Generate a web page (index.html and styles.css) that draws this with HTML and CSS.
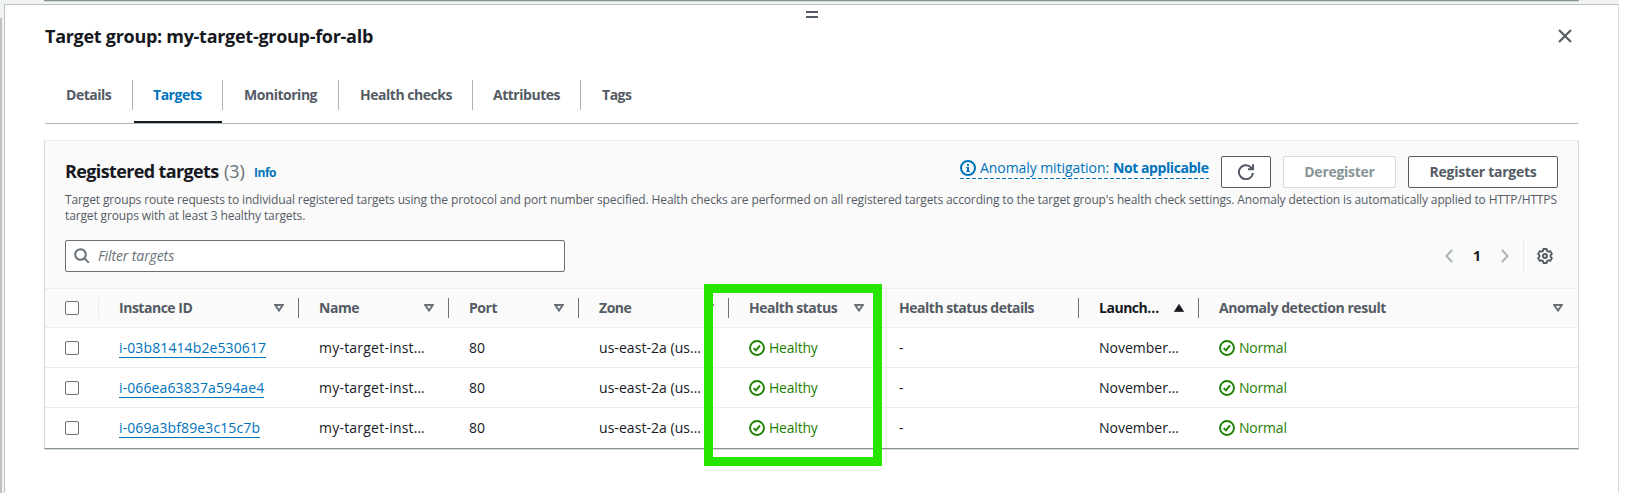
FILE: index.html
```html
<!DOCTYPE html>
<html lang="en">
<head>
<meta charset="utf-8">
<title>Target group: my-target-group-for-alb</title>
<link rel="stylesheet" href="styles.css">
</head>
<body>
<svg class="defs" aria-hidden="true">
  <symbol id="sort" viewBox="0 0 10 8"><path d="M1.2 1h7.6L5 6.6z" fill="none" stroke="currentColor" stroke-width="1.9"/></symbol>
  <symbol id="ok" viewBox="0 0 16 16"><g fill="none" stroke="currentColor" stroke-width="1.9"><circle cx="8" cy="8" r="7"/><path d="M4.6 8.2 7 10.4l4-5"/></g></symbol>
</svg>
<div class="backdrop"><div class="page-scroll"></div><div class="page-edge"></div></div>
<main class="panel">
  <div class="grip"></div>
  <header class="panel-head">
    <h1>Target group: my-target-group-for-alb</h1>
    <svg class="close" viewBox="0 0 14 14"><path d="M1 1l12 12M13 1L1 13" fill="none" stroke="currentColor" stroke-width="2.1"/></svg>
  </header>
  <nav class="tabs">
    <a class="tab t1">Details</a><a class="tab t2 active">Targets</a><a class="tab t3">Monitoring</a><a class="tab t4">Health checks</a><a class="tab t5">Attributes</a><a class="tab t6">Tags</a>
  </nav>
  <section class="box">
    <div class="box-head">
      <div class="title-row">
        <h2>Registered targets</h2><span class="count">(3)</span><a class="info">Info</a>
        <div class="actions">
          <a class="anomaly"><svg class="i16" viewBox="0 0 16 16"><circle cx="8" cy="8" r="7" fill="none" stroke="currentColor" stroke-width="2"/><path d="M7 4h2v2H7zM6.3 7H9v4h1v1H6.3v-1H7V8h-.7z" fill="currentColor"/></svg><span class="am">Anomaly mitigation:</span><b>Not applicable</b></a>
          <button class="btn refresh"><svg class="i16" viewBox="0 0 16 16"><path d="M14.9 9A7 7 0 1 1 13.2 3.6L15 5.2M15 .2v5H10" fill="none" stroke="currentColor" stroke-width="2"/></svg></button>
          <button class="btn dereg">Deregister</button>
          <button class="btn reg">Register targets</button>
        </div>
      </div>
      <p class="desc"><span class="line">Target groups route requests to individual registered targets using the protocol and port number specified. Health checks are performed on all registered targets according to the target group's health check settings. Anomaly detection is automatically applied to HTTP/HTTPS</span> <span class="line">target groups with at least 3 healthy targets.</span></p>
      <div class="filter-row">
        <div class="search"><svg class="i16" viewBox="0 0 16 16"><g fill="none" stroke="currentColor" stroke-width="2"><circle cx="6.5" cy="6.5" r="5.3"/><path d="M10.4 10.4l4.4 4.2"/></g></svg><span>Filter targets</span></div>
        <div class="pager">
          <svg class="chev" viewBox="0 0 8 14"><path d="M7.2 1L1.4 7l5.8 6" fill="none" stroke="currentColor" stroke-width="2"/></svg>
          <b>1</b>
          <svg class="chev" viewBox="0 0 8 14"><path d="M.8 1l5.8 6-5.8 6" fill="none" stroke="currentColor" stroke-width="2"/></svg>
          <span class="rule"></span>
          <svg class="gear" viewBox="0 0 16 16"><g fill="none" stroke="currentColor" stroke-width="1.9" stroke-linejoin="round"><path d="M6.4 1h3.2l.5 1.9 1.3.8 1.9-.6 1.6 2.8L13.5 7.3v1.4l1.4 1.4-1.6 2.8-1.9-.6-1.3.8-.5 1.9H6.4l-.5-1.9-1.3-.8-1.9.6-1.6-2.8 1.4-1.4V7.3L1.1 5.9l1.6-2.8 1.9.6 1.3-.8z"/><circle cx="8" cy="8" r="2"/></g></svg>
        </div>
      </div>
    </div>
    <div class="grid thead">
      <div class="cell pick faint"><i class="check"></i></div>
      <div class="cell"><b>Instance ID</b><svg class="sort"><use href="#sort"/></svg></div>
      <div class="cell"><b>Name</b><svg class="sort"><use href="#sort"/></svg></div>
      <div class="cell"><b>Port</b><svg class="sort"><use href="#sort"/></svg></div>
      <div class="cell"><b>Zone</b><svg class="sort"><use href="#sort"/></svg></div>
      <div class="cell"><b>Health status</b><svg class="sort"><use href="#sort"/></svg></div>
      <div class="cell"><b>Health status details</b></div>
      <div class="cell sorted"><b>Launch…</b><svg class="sort up" viewBox="0 0 10 8"><path d="M5 .4 9.6 7.6H.4z" fill="currentColor" stroke="currentColor" stroke-width=".8"/></svg></div>
      <div class="cell last"><b>Anomaly detection result</b><svg class="sort"><use href="#sort"/></svg></div>
    </div>
    <div class="grid row">
      <div class="cell pick"><i class="check"></i></div><div class="cell"><a class="id">i-03b81414b2e530617</a></div><div class="cell"><span class="nm">my-target-inst…</span></div><div class="cell">80</div><div class="cell zone">us-east-2a (us…</div><div class="cell ok"><svg class="i16"><use href="#ok"/></svg>Healthy</div><div class="cell">-</div><div class="cell">November…</div><div class="cell ok"><svg class="i16"><use href="#ok"/></svg>Normal</div>
    </div>
    <div class="grid row">
      <div class="cell pick"><i class="check"></i></div><div class="cell"><a class="id">i-066ea63837a594ae4</a></div><div class="cell"><span class="nm">my-target-inst…</span></div><div class="cell">80</div><div class="cell zone">us-east-2a (us…</div><div class="cell ok"><svg class="i16"><use href="#ok"/></svg>Healthy</div><div class="cell">-</div><div class="cell">November…</div><div class="cell ok"><svg class="i16"><use href="#ok"/></svg>Normal</div>
    </div>
    <div class="grid row">
      <div class="cell pick"><i class="check"></i></div><div class="cell"><a class="id">i-069a3bf89e3c15c7b</a></div><div class="cell"><span class="nm">my-target-inst…</span></div><div class="cell">80</div><div class="cell zone">us-east-2a (us…</div><div class="cell ok"><svg class="i16"><use href="#ok"/></svg>Healthy</div><div class="cell">-</div><div class="cell">November…</div><div class="cell ok"><svg class="i16"><use href="#ok"/></svg>Normal</div>
    </div>
  </section>
</main>
<div class="highlight"></div>
</body>
</html>
```
FILE: styles.css
```css
* { box-sizing: border-box; }
body { margin: 0; height: 493px; overflow: hidden; position: relative; background: #fff; font: 14px/22px "Open Sans", "Noto Sans", sans-serif; color: #16191f; }
.defs { position: absolute; width: 0; height: 0; }
h1, h2, p { margin: 0; }
a { color: #0073bb; }
svg { display: block; flex: none; }
.i16 { width: 16px; height: 16px; }

/* Page visible behind the split panel */
.backdrop { position: absolute; inset: 0 20px 0 0; background: #f2f3f3; }
.page-edge { position: absolute; left: 44px; right: 40px; top: 0; height: 1px; background: #879196; box-shadow: 0 1px 0 #d5dbdb; }
.page-scroll { position: absolute; left: 0; top: 18px; bottom: 0; width: 2px; background: #c1c1c1; }

.panel { position: relative; margin-left: 4px; margin-right: 20px; top: 4px; height: 489px; padding: 0 39px; background: #fff; border: solid #b9c3c6; border-width: 1px 1px 0; border-right-color: #d5dbdb; }
.grip { position: absolute; left: 801px; top: 6px; width: 12px; height: 7px; border: solid #545b64; border-width: 2px 0; }
.panel-head { display: flex; justify-content: space-between; height: 60px; padding: 19px 7px 0 1px; }
h1 { font-size: 18px; line-height: 24px; letter-spacing: -.286px; }
.close { width: 14px; height: 14px; margin-top: 5px; color: #545b64; }

.tabs { display: flex; height: 59px; margin: 0 1px; padding-top: 15px; border-bottom: 1px solid #aab7b8; }
.tab { position: relative; height: 30px; padding: 4px 0 0 21px; border-right: 1px solid #aab7b8; color: #545b64; font-weight: 700; letter-spacing: -.48px; white-space: nowrap; }
.t1 { width: 88px; } .t2 { width: 90px; padding-left: 20px; } .t3 { width: 116px; } .t4 { width: 134px; } .t5 { width: 108px; padding-left: 20px; } .t6 { border: 0; }
.tab.active { color: #0073bb; }
.tab.active::after { content: ""; position: absolute; left: 1px; right: 0; top: 41px; height: 2px; background: #16191f; }

.box { margin-top: 16px; height: 309px; border: 1px solid #d5dbdb; border-top-color: #eaeded; border-bottom: 1px solid #879196; box-shadow: 0 1px 0 #d5dbdb; }
.box-head { height: 147px; padding: 15px 20px 0; background: #fafafa; }
.title-row { display: flex; height: 32px; white-space: nowrap; }
h2 { width: 159px; font-size: 18px; line-height: 30px; letter-spacing: -.632px; }
.count { width: 30px; font-size: 18px; line-height: 30px; color: #687078; }
.info { font-size: 12px; line-height: 33px; font-weight: 700; letter-spacing: -.48px; }
.actions { display: flex; margin-left: auto; }
.anomaly { display: flex; align-items: center; width: 249px; height: 23px; margin-right: 12px; background: repeating-linear-gradient(90deg, #0073bb 0 4px, transparent 4px 6px) 0 22px / 100% 1px no-repeat; }
.anomaly .am { margin: 0 4px; letter-spacing: -.073px; }
.anomaly b { letter-spacing: -.43px; }
.btn { height: 32px; padding: 0; border: 1px solid #545b64; border-radius: 2px; background: #fff; color: #545b64; font: 700 14px/22px "Open Sans", sans-serif; letter-spacing: -.27px; }
.refresh { display: flex; align-items: center; justify-content: center; width: 50px; }
.dereg { width: 113px; margin: 0 12px; border-color: #d5dbdb; color: #879596; }
.reg { width: 150px; }
.desc { margin-top: 4px; font-size: 12px; line-height: 16px; color: #545b64; letter-spacing: -.13px; }
.line { display: block; white-space: nowrap; }
.filter-row { display: flex; justify-content: space-between; margin-top: 16px; height: 32px; }
.search { display: flex; align-items: center; gap: 8px; width: 500px; padding: 0 8px; border: 1px solid #687078; border-radius: 2px; background: #fff; color: #687078; font-style: italic; letter-spacing: -.1px; }
.pager { display: flex; align-items: center; color: #aab7b8; padding-right: 5px; }
.pager b { width: 48px; text-align: center; color: #16191f; }
.chev { width: 8px; height: 14px; }
.rule { width: 1px; height: 32px; margin: 0 13px 0 14px; background: #eaeded; }
.gear { width: 16px; height: 16px; color: #545b64; }

.grid { display: grid; grid-template-columns: 54px 200px 150px 130px 150px 150px 200px 120px 1fr; height: 40px; border-top: 1px solid #eaeded; }
.cell { display: flex; align-items: center; padding-left: 20px; white-space: nowrap; min-width: 0; }
.thead { height: 39px; background: #fafafa; color: #545b64; align-items: center; }
.thead .cell { height: 20px; justify-content: space-between; padding-right: 14px; border-right: 1px solid #687078; letter-spacing: -.48px; }
.thead .faint { border-color: #eaeded; }
.thead .last { border: 0; padding-right: 15px; letter-spacing: -.43px; }
.thead .sorted { color: #16191f; }
.sort { width: 10px; height: 8px; color: #687078; }
.sort.up { color: #16191f; }
.check { width: 14px; height: 14px; border: 1px solid #687078; border-radius: 2px; background: #fff; }
.id { line-height: 19px; letter-spacing: .11px; border-bottom: 1px solid #0073bb; }
.nm { letter-spacing: .22px; }
.zone { letter-spacing: .05px; }
.ok { gap: 4px; color: #1d8102; letter-spacing: -.2px; }

/* Marker drawn over the health status column */
.highlight { position: absolute; left: 704px; top: 284px; width: 178px; height: 182px; border: 9px solid #26e600; }
```
